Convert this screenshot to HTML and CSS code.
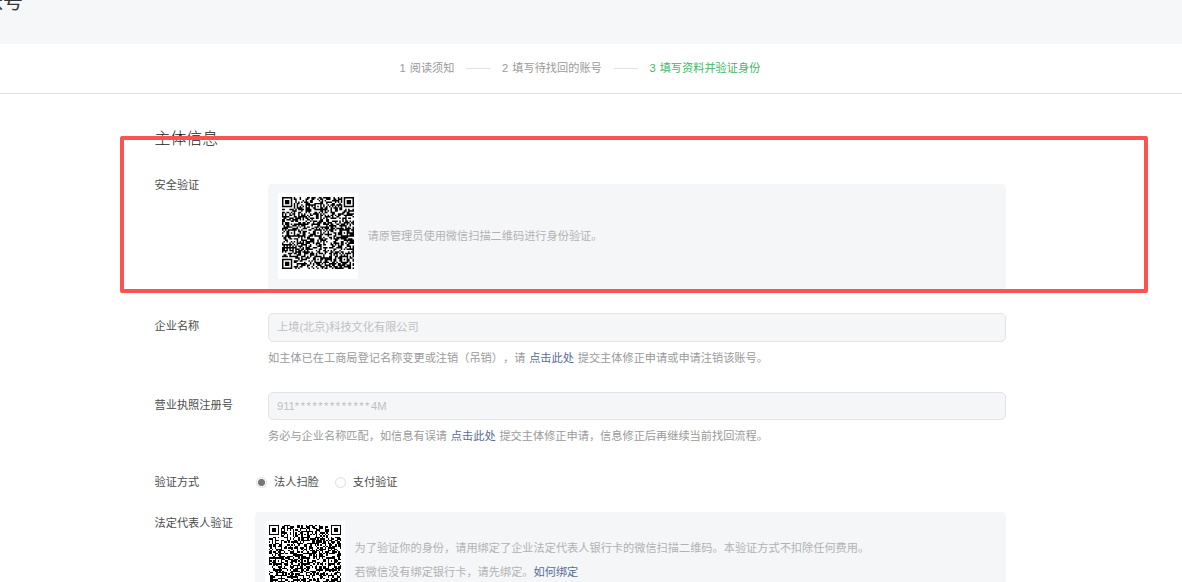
FILE: index.html
```html
<!DOCTYPE html>
<html lang="zh-CN">
<head>
<meta charset="utf-8">
<title>找回账号</title>
<link rel="stylesheet" href="styles.css">
</head>
<body>
<header class="page-header"><h1 class="page-title">找回账号</h1></header>
<nav class="steps">
  <span class="step">1 阅读须知</span>
  <i class="step-line"></i>
  <span class="step">2 填写待找回的账号</span>
  <i class="step-line"></i>
  <span class="step step-active">3 填写资料并验证身份</span>
</nav>
<main class="form">
  <h2 class="section-title">主体信息</h2>
  <section class="row row-security">
    <div class="label">安全验证</div>
    <div class="panel">
      <div class="qr-card"><svg class="qr" data-seed="7" viewBox="0 0 49 49"></svg></div>
      <p class="panel-text">请原管理员使用微信扫描二维码进行身份验证。</p>
    </div>
  </section>
  <section class="row row-company">
    <div class="label">企业名称</div>
    <div class="field">
      <div class="input">上境(北京)科技文化有限公司</div>
      <p class="hint">如主体已在工商局登记名称变更或注销（吊销），请 <a class="link">点击此处</a> 提交主体修正申请或申请注销该账号。</p>
    </div>
  </section>
  <section class="row row-license">
    <div class="label">营业执照注册号</div>
    <div class="field">
      <div class="input input-license">911<span class="mask">*************</span>4M</div>
      <p class="hint">务必与企业名称匹配，如信息有误请 <a class="link">点击此处</a> 提交主体修正申请，信息修正后再继续当前找回流程。</p>
    </div>
  </section>
  <section class="row row-method">
    <div class="label">验证方式</div>
    <div class="radios">
      <span class="radio radio-on"></span><span class="radio-text">法人扫脸</span>
      <span class="radio"></span><span class="radio-text">支付验证</span>
    </div>
  </section>
  <section class="row row-legal">
    <div class="label">法定代表人验证</div>
    <div class="panel panel-legal">
      <div class="qr-card"><svg class="qr qr-sharp" data-seed="91" viewBox="0 0 49 49"></svg></div>
      <p class="panel-text">为了验证你的身份，请用绑定了企业法定代表人银行卡的微信扫描二维码。本验证方式不扣除任何费用。<br>若微信没有绑定银行卡，请先绑定。<a class="link">如何绑定</a></p>
    </div>
  </section>
</main>
<div class="highlight"></div>
<script src="qr.js"></script>
</body>
</html>
```
FILE: styles.css
```css
* { box-sizing: border-box; }
body {
  position: relative;
  margin: 0;
  height: 582px;
  overflow: hidden;
  background: #fff;
  color: #353535;
  font: 400 11.2px/18px "Liberation Sans", "Noto Sans CJK SC", sans-serif;
  text-spacing-trim: space-all;
}
p, h1, h2 { margin: 0; font-weight: 400; }
.page-header { height: 44px; overflow: hidden; background: #f6f7f9; }
.page-title { margin: -13px 0 0 -57px; font-size: 20px; line-height: 30px; white-space: nowrap; }
.steps {
  display: flex;
  align-items: center;
  height: 50px;
  padding: 0 0 1px 399.5px;
  border-bottom: 1px solid #e0e1e3;
  color: #9a9a9a;
  word-spacing: 0.9px;
  white-space: nowrap;
}
.step-line { width: 24px; height: 1px; margin: 1px 11.8px 0; background: #e0e1e3; }
.step-active { color: #3fb865; }
.form { height: 488px; padding: 32px 176px 0 154.5px; overflow: hidden; }
.section-title { color: #222; font-size: 15.9px; font-weight: 300; line-height: 26px; }
.row { display: flex; align-items: flex-start; }
.row-security { height: 129px; margin-top: 32px; }
.label { flex: none; width: 113.5px; color: #4c4c4c; white-space: nowrap; }
.row-security .label { margin-top: -8px; }
.panel {
  display: flex;
  align-items: flex-start;
  flex: 1;
  height: 106px;
  padding: 9px 10px 0;
  background: #f5f6f8;
  border-radius: 4px;
  color: #b2b2b2;
}
.qr-card { flex: none; width: 80px; height: 86px; padding: 4px; background: #fff; }
.qr { display: block; width: 72px; height: 72px; }
.qr-sharp { shape-rendering: crispEdges; }
.panel-text { margin-left: 9.5px; padding-top: 31px; line-height: 24px; white-space: nowrap; }
.field { flex: 1; }
.input {
  height: 29px;
  padding: 0 8px;
  background: #f5f6f8;
  border: 1px solid #e2e3e6;
  border-radius: 5px;
  color: #c0c0c0;
  line-height: 27px;
}
.input-license { height: 28px; }
.mask { letter-spacing: 1.5px; }
.hint { margin-top: 7px; color: #9a9a9a; word-spacing: 0.7px; white-space: nowrap; }
.link { color: #576b95; }
.row-company { height: 79px; }
.row-company .label, .row-license .label { padding-top: 4px; }
.row-license { height: 81px; }
.row-method { height: 39px; }
.row-method .label { width: 101.5px; }
.radios { display: flex; align-items: center; height: 18px; color: #4c4c4c; }
.radio { width: 11px; height: 11px; border: 1px solid #dedede; border-radius: 50%; }
.radio-on { background: radial-gradient(circle, #777 0 3.2px, #fff 3.9px); }
.radio-text { margin: 0 16px 0 7px; }
.row-legal .label { width: 100.5px; padding-top: 2px; }
.panel-legal { height: 70px; border-radius: 4px 4px 0 0; }
.panel-legal .qr-card { height: 61px; overflow: hidden; }
.panel-legal .panel-text { padding-top: 15px; }
.highlight {
  position: absolute;
  left: 120px;
  top: 136px;
  width: 1028px;
  height: 157px;
  border: 4px solid #fb5252;
  border-radius: 2px;
}
```
FILE: qr.js
```js
// Fills each QR svg with a 49-module grid: finder, alignment and timing patterns plus seeded data.
const SIZE = 49;

function ring(dx, dy, radii) {
  return radii.includes(Math.max(Math.abs(dx), Math.abs(dy)));
}

function isDark(x, y, rand) {
  for (const [cx, cy] of [[3, 3], [45, 3], [3, 45]]) {
    if (Math.abs(x - cx) <= 4 && Math.abs(y - cy) <= 4) return ring(x - cx, y - cy, [0, 1, 3]);
  }
  for (const [cx, cy] of [[24, 6], [6, 24], [24, 24], [42, 24], [24, 42], [42, 42]]) {
    if (Math.abs(x - cx) <= 2 && Math.abs(y - cy) <= 2) return ring(x - cx, y - cy, [0, 2]);
  }
  if (x === 6) return y % 2 === 0;
  if (y === 6) return x % 2 === 0;
  return rand < 0.52;
}

document.querySelectorAll(".qr").forEach((svg) => {
  let seed = Number(svg.dataset.seed);
  let d = "";
  for (let y = 0; y < SIZE; y++) {
    let start = -1;
    for (let x = 0; x <= SIZE; x++) {
      seed = (seed * 1664525 + 1013904223) % 4294967296;
      const dark = x < SIZE && isDark(x, y, seed / 4294967296);
      if (dark && start < 0) start = x;
      if (!dark && start >= 0) {
        d += `M${start} ${y}h${x - start}v1h-${x - start}z`;
        start = -1;
      }
    }
  }
  const path = document.createElementNS("http://www.w3.org/2000/svg", "path");
  path.setAttribute("d", d);
  svg.appendChild(path);
});
```
